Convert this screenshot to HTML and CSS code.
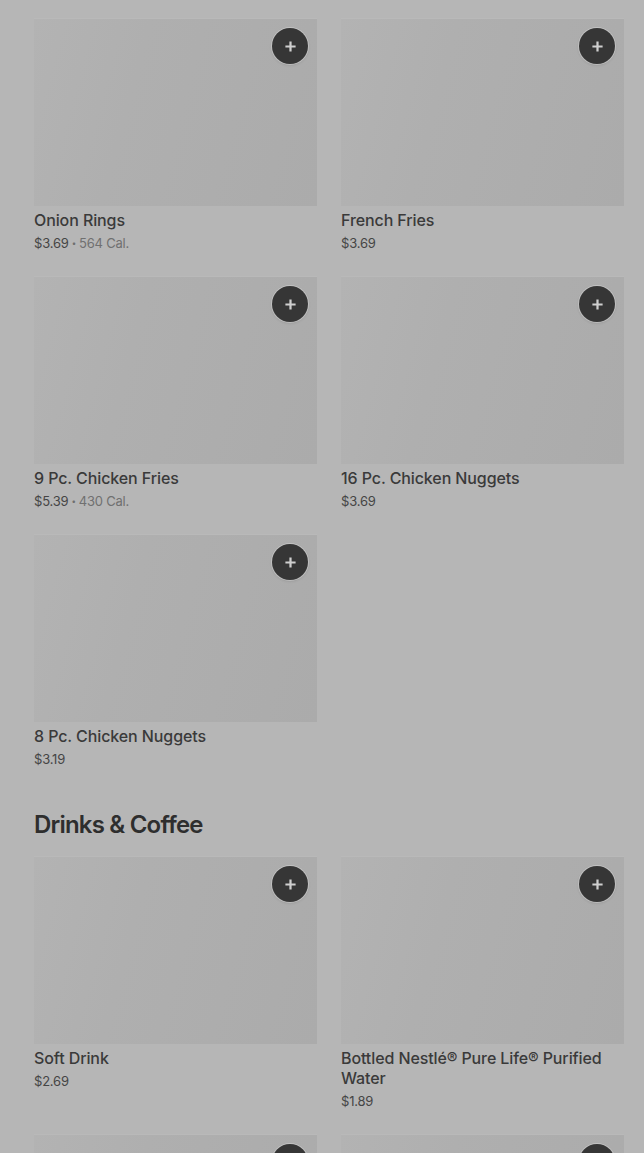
FILE: index.html
```html
<!DOCTYPE html>
<html>
<head>
<meta charset="utf-8">
<link rel="stylesheet" href="styles.css">
</head>
<body>
<main class="menu">
  <section class="section">
    <div class="grid">
      <div class="item">
        <div class="thumb"><button class="add"><svg viewBox="0 0 14 14"><path d="M7 1.5v11M1.5 7h11"/></svg></button></div>
        <div class="name">Onion Rings</div>
        <div class="meta"><span class="price">$3.69</span><span class="dot">•</span><span class="cal">564 Cal.</span></div>
      </div>
      <div class="item">
        <div class="thumb"><button class="add"><svg viewBox="0 0 14 14"><path d="M7 1.5v11M1.5 7h11"/></svg></button></div>
        <div class="name">French Fries</div>
        <div class="meta"><span class="price">$3.69</span></div>
      </div>
      <div class="item">
        <div class="thumb"><button class="add"><svg viewBox="0 0 14 14"><path d="M7 1.5v11M1.5 7h11"/></svg></button></div>
        <div class="name">9 Pc. Chicken Fries</div>
        <div class="meta"><span class="price">$5.39</span><span class="dot">•</span><span class="cal">430 Cal.</span></div>
      </div>
      <div class="item">
        <div class="thumb"><button class="add"><svg viewBox="0 0 14 14"><path d="M7 1.5v11M1.5 7h11"/></svg></button></div>
        <div class="name">16 Pc. Chicken Nuggets</div>
        <div class="meta"><span class="price">$3.69</span></div>
      </div>
      <div class="item">
        <div class="thumb"><button class="add"><svg viewBox="0 0 14 14"><path d="M7 1.5v11M1.5 7h11"/></svg></button></div>
        <div class="name">8 Pc. Chicken Nuggets</div>
        <div class="meta"><span class="price">$3.19</span></div>
      </div>
    </div>
  </section>
  <section class="section">
    <h2 class="heading">Drinks &amp; Coffee</h2>
    <div class="grid">
      <div class="item">
        <div class="thumb"><button class="add"><svg viewBox="0 0 14 14"><path d="M7 1.5v11M1.5 7h11"/></svg></button></div>
        <div class="name">Soft Drink</div>
        <div class="meta"><span class="price">$2.69</span></div>
      </div>
      <div class="item">
        <div class="thumb"><button class="add"><svg viewBox="0 0 14 14"><path d="M7 1.5v11M1.5 7h11"/></svg></button></div>
        <div class="name">Bottled Nestlé® Pure Life® Purified Water</div>
        <div class="meta"><span class="price">$1.89</span></div>
      </div>
      <div class="item">
        <div class="thumb"><button class="add"><svg viewBox="0 0 14 14"><path d="M7 1.5v11M1.5 7h11"/></svg></button></div>
      </div>
      <div class="item">
        <div class="thumb"><button class="add"><svg viewBox="0 0 14 14"><path d="M7 1.5v11M1.5 7h11"/></svg></button></div>
      </div>
    </div>
  </section>
</main>
</body>
</html>
```
FILE: styles.css
```css
html, body {
  margin: 0;
  padding: 0;
  background: #b6b6b6;
}
body {
  font-family: Inter, "Noto Sans", Roboto, sans-serif;
  color: #333;
  overflow: hidden;
  height: 1153px;
}
.menu {
  padding: 18px 20px 0 34px;
}
.section {
  margin-bottom: 40px;
}
.grid {
  display: grid;
  grid-template-columns: 283px 283px;
  column-gap: 24px;
  row-gap: 23px;
}
.thumb {
  position: relative;
  height: 188px;
  background: linear-gradient(105deg, #b3b3b3 0%, #afafaf 35%, #ababab 100%);
  border-top: 1px solid #b9b9b9;
  box-sizing: border-box;
}
.add {
  position: absolute;
  top: 9px;
  right: 9px;
  width: 36px;
  height: 36px;
  border-radius: 50%;
  border: none;
  padding: 0;
  background: #363636;
  box-shadow: 0 0 0 1px rgba(215, 215, 215, 0.55), 0 1px 3px rgba(0,0,0,0.15);
  display: flex;
  align-items: center;
  justify-content: center;
}
.add svg {
  width: 13px;
  height: 13px;
  stroke: #cfcfcf;
  stroke-width: 2.4;
  fill: none;
}
.name {
  margin-top: 4px;
  font-size: 16px;
  line-height: 20px;
  font-weight: 500;
  color: #3a3a3a;
  letter-spacing: -0.1px;
}
.meta {
  margin-top: 3px;
  font-size: 13px;
  line-height: 20px;
  color: #454545;
  letter-spacing: -0.2px;
}
.dot {
  color: #6e6e6e;
  font-size: 8px;
  margin: 0 3px;
  vertical-align: 2px;
}
.cal {
  color: #707070;
}
.heading {
  margin: 0 0 15px 0;
  font-size: 24px;
  line-height: 32px;
  font-weight: 600;
  letter-spacing: -0.8px;
  color: #2e2e2e;
}
```
